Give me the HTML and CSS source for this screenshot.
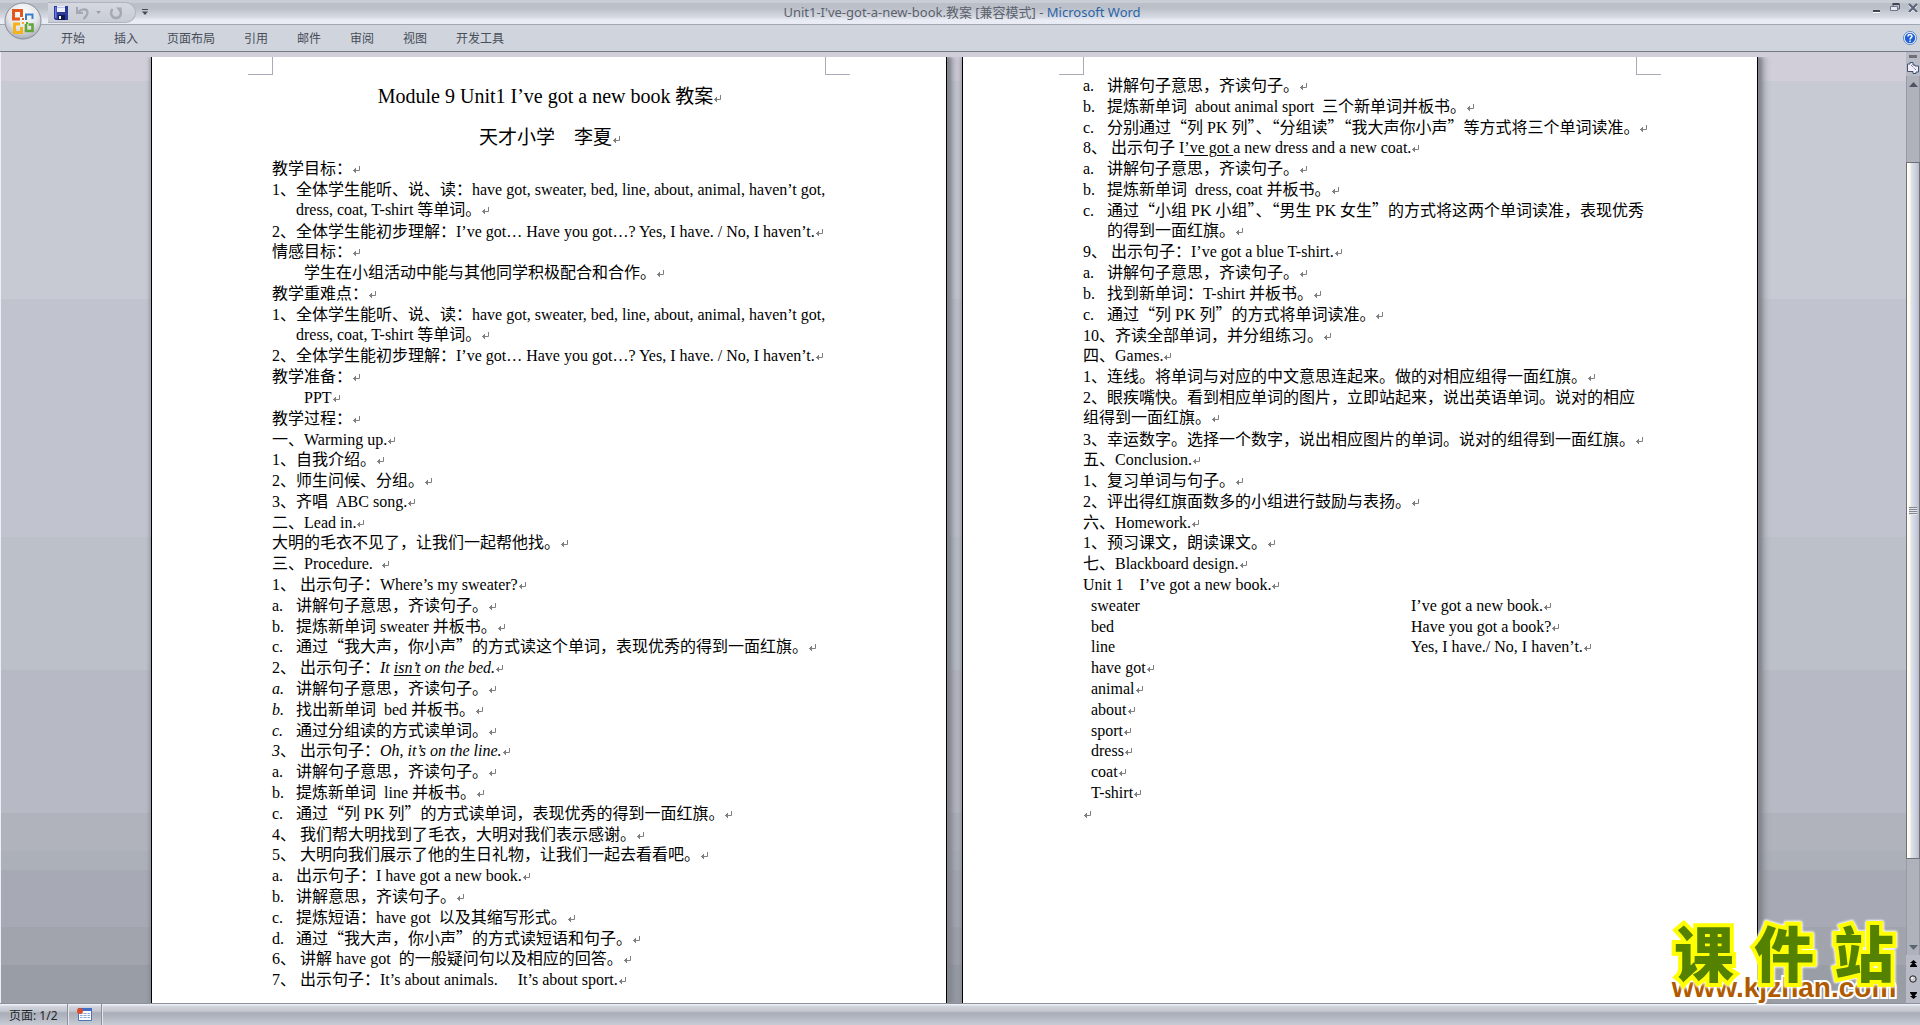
FILE: index.html
```html
<!DOCTYPE html>
<html lang="zh-CN">
<head>
<meta charset="utf-8">
<title>Unit1-I've-got-a-new-book.教案 [兼容模式] - Microsoft Word</title>
<link rel="stylesheet" href="styles.css">
</head>
<body>
<div class="app">
  <header class="titlebar">
    <div class="quick">
      <button class="ico" aria-label="保存"><svg width="14" height="14" viewBox="0 0 14 14"><path d="M0 0h14v14H1.500L0 12.500z" fill="#2c3a9c"/><path d="M1 1h1.500v11H1z" fill="#6d7be0"/><path d="M3 0h8v6H3z" fill="#eef1fb"/><path d="M3 1h8v1H3z" fill="#b9c2e8"/><path d="M4 9h7v5H4z" fill="#11184a"/><path d="M5 10h2v3H5z" fill="#fff"/></svg></button>
      <button class="ico" aria-label="撤消"><svg width="14" height="14" viewBox="0 0 14 14"><path d="M1 1v6h6" fill="none" stroke="#a3a8b4" stroke-width="2"/><path d="M2 6.500C5 3 11 2 11.500 6c.3 3-2 5-4 7" fill="none" stroke="#a3a8b4" stroke-width="2.200"/></svg></button>
      <button class="ico tiny" aria-label="撤消列表"><svg width="5" height="3" viewBox="0 0 5 3"><path d="M0 0h5L2.500 3z" fill="#9a9fab"/></svg></button>
      <button class="ico" aria-label="重复"><svg width="14" height="14" viewBox="0 0 14 14"><path d="M3.500 3C1 6 2 12 7 12s6.500-6 3-9" fill="none" stroke="#a3a8b4" stroke-width="2.400"/><path d="M7 1.500h5.500V7z" fill="#a3a8b4"/></svg></button>
    </div>
    <button class="ico more" aria-label="自定义快速访问工具栏"><svg width="6" height="6" viewBox="0 0 6 6"><path d="M0 0h6v1H0zM0 2.500h6L3 6z" fill="#444a55"/></svg></button>
    <h1 class="caption">Unit1-I've-got-a-new-book.教案 [兼容模式] - <span>Microsoft Word</span></h1>
    <div class="window">
      <button class="ico" aria-label="最小化"><svg width="10" height="10" viewBox="0 0 10 10"><path d="M1 7h7v2H1z" fill="#41454f"/><path d="M1 9h7v1H1z" fill="#fff"/></svg></button>
      <button class="ico" aria-label="还原"><svg width="10" height="10" viewBox="0 0 10 10"><path d="M3 3V1.500h6.500V6H8" fill="none" stroke="#555b68"/><path d="M2.500 1h7" stroke="#41454f" stroke-width="2"/><path d="M.5 3.500h7v4h-7z" fill="#e6e9f2" stroke="#6b7691"/></svg></button>
      <button class="ico" aria-label="关闭"><svg width="10" height="10" viewBox="0 0 10 10"><path d="M1 2l8 8M9 2l-8 8" stroke="#fff" stroke-width="2"/><path d="M1 1l8 8M9 1L1 9" stroke="#5b6579" stroke-width="2.200"/></svg></button>
    </div>
  </header>
  <button class="office" aria-label="Office 按钮"><svg width="38" height="38" viewBox="0 0 38 38">
    <defs><radialGradient id="orb" cx=".5" cy=".3" r=".7"><stop offset="0" stop-color="#fff"/><stop offset=".6" stop-color="#e3e5ea"/><stop offset="1" stop-color="#a9adb6"/></radialGradient></defs>
    <circle cx="19" cy="19" r="18" fill="url(#orb)" stroke="#8a8e98"/>
    <g fill="none" stroke-width="3"><path d="M16 17H9.500V8.500h8V15" stroke="#e2571c"/><path d="M22 17V12.500h6.500V17" stroke="#3a7fc9" stroke-width="2"/><path d="M16 22H10.500v8.500h7V25" stroke="#f6b21b"/><path d="M22 22v7h6.500V22.500h-4" stroke="#63a537" stroke-width="2.600"/></g>
    <path d="M18 16h2v2h-2z" fill="#e2571c"/><path d="M21 16h2v2h-2z" fill="#3a7fc9"/><path d="M18 20h2v2h-2z" fill="#f6b21b"/><path d="M22 20h2v2h-2z" fill="#63a537"/>
  </svg></button>
  <nav class="ribbon">
    <button>开始</button><button>插入</button><button>页面布局</button><button>引用</button><button>邮件</button><button>审阅</button><button>视图</button><button>开发工具</button>
    <button class="help" aria-label="帮助"><svg width="14" height="14" viewBox="0 0 14 14"><circle cx="7" cy="7" r="6.500" fill="#fff" stroke="#5b86c4"/><circle cx="7" cy="7" r="5.200" fill="#1f5fd6"/><path d="M5 5.500C5 3 9 3 9 5.300 9 6.700 7 6.700 7 8.500M7 9.500V11" fill="none" stroke="#fff" stroke-width="1.500"/></svg></button>
  </nav>

  <main class="workspace">
    <div class="pages">
      <article class="page">
        <h2><span class="big">Module 9 Unit1 I’ve got a new book</span> 教案</h2>
        <h2>天才小学　李夏</h2>
        <p>教学目标：</p>
        <p class="two hang">1、全体学生能听、说、读：have got, sweater, bed, line, about, animal, haven’t got,<br>dress, coat, T-shirt 等单词。</p>
        <p>2、全体学生能初步理解：I’ve got… Have you got…? Yes, I have. / No, I haven’t.</p>
        <p>情感目标：</p>
        <p class="indent">学生在小组活动中能与其他同学积极配合和合作。</p>
        <p>教学重难点：</p>
        <p class="two hang">1、全体学生能听、说、读：have got, sweater, bed, line, about, animal, haven’t got,<br>dress, coat, T-shirt 等单词。</p>
        <p>2、全体学生能初步理解：I’ve got… Have you got…? Yes, I have. / No, I haven’t.</p>
        <p>教学准备：</p>
        <p class="indent">PPT</p>
        <p>教学过程：</p>
        <p>一、Warming up.</p>
        <p>1、自我介绍。</p>
        <p>2、师生问候、分组。</p>
        <p>3、齐唱&nbsp; ABC song.</p>
        <p>二、Lead in.</p>
        <p>大明的毛衣不见了，让我们一起帮他找。</p>
        <p>三、Procedure.&nbsp; </p>
        <p>1、 出示句子：Where’s my sweater?</p>
        <p><span class="mk">a.</span>讲解句子意思，齐读句子。</p>
        <p><span class="mk">b.</span>提炼新单词 sweater 并板书。</p>
        <p><span class="mk">c.</span><span class="zh">通过“我大声，你小声”的方式读这个单词，表现优秀的得到一面红旗。</span></p>
        <p>2、 出示句子：<i>It <u>isn’t</u> on the bed.</i></p>
        <p><i class="mk">a.</i>讲解句子意思，齐读句子。</p>
        <p><i class="mk">b.</i>找出新单词&nbsp; bed 并板书。</p>
        <p><i class="mk">c.</i>通过分组读的方式读单词。</p>
        <p><i>3</i>、 出示句子：<i>Oh, it’s on the line.</i></p>
        <p><span class="mk">a.</span>讲解句子意思，齐读句子。</p>
        <p><span class="mk">b.</span>提炼新单词&nbsp; line 并板书。</p>
        <p><span class="mk">c.</span><span class="zh">通过“列</span> PK <span class="zh">列”的方式读单词，表现优秀的得到一面红旗。</span></p>
        <p>4、 我们帮大明找到了毛衣，大明对我们表示感谢。</p>
        <p>5、 大明向我们展示了他的生日礼物，让我们一起去看看吧。</p>
        <p><span class="mk">a.</span>出示句子：I have got a new book.</p>
        <p><span class="mk">b.</span>讲解意思，齐读句子。</p>
        <p><span class="mk">c.</span>提炼短语：have got&nbsp; 以及其缩写形式。</p>
        <p><span class="mk">d.</span><span class="zh">通过“我大声，你小声”的方式读短语和句子。</span></p>
        <p>6、 讲解 have got&nbsp; 的一般疑问句以及相应的回答。</p>
        <p>7、 出示句子：It’s about animals.&nbsp;&nbsp;&nbsp;&nbsp; It’s about sport.</p>
      </article>
      <article class="page">
        <p><span class="mk">a.</span>讲解句子意思，齐读句子。</p>
        <p><span class="mk">b.</span>提炼新单词&nbsp; about animal sport&nbsp; 三个新单词并板书。</p>
        <p><span class="mk">c.</span><span class="zh">分别通过“列</span> PK <span class="zh">列”、“分组读”“我大声你小声”等方式将三个单词读准。</span></p>
        <p>8、 出示句子 I<u>’ve got </u>a new dress and a new coat.</p>
        <p><span class="mk">a.</span>讲解句子意思，齐读句子。</p>
        <p><span class="mk">b.</span>提炼新单词&nbsp; dress, coat 并板书。</p>
        <p class="two hang"><span class="mk">c.</span><span class="zh">通过“小组</span> PK <span class="zh">小组”、“男生</span> PK <span class="zh">女生”的方式将这两个单词读准，表现优秀</span><br>的得到一面红旗。</p>
        <p>9、 出示句子：I’ve got a blue T-shirt.</p>
        <p><span class="mk">a.</span>讲解句子意思，齐读句子。</p>
        <p><span class="mk">b.</span>找到新单词：T-shirt 并板书。</p>
        <p><span class="mk">c.</span><span class="zh">通过“列</span> PK <span class="zh">列”的方式将单词读准。</span></p>
        <p>10、齐读全部单词，并分组练习。</p>
        <p>四、Games.</p>
        <p>1、连线。将单词与对应的中文意思连起来。做的对相应组得一面红旗。</p>
        <p class="two">2、眼疾嘴快。看到相应单词的图片，立即站起来，说出英语单词。说对的相应<br>组得到一面红旗。</p>
        <p>3、幸运数字。选择一个数字，说出相应图片的单词。说对的组得到一面红旗。</p>
        <p>五、Conclusion.</p>
        <p>1、复习单词与句子。</p>
        <p>2、评出得红旗面数多的小组进行鼓励与表扬。</p>
        <p>六、Homework.</p>
        <p>1、预习课文，朗读课文。</p>
        <p>七、Blackboard design.</p>
        <p>Unit 1&nbsp;&nbsp;&nbsp; I’ve got a new book.</p>
        <p class="word"><span class="col">sweater</span>I’ve got a new book.</p>
        <p class="word"><span class="col">bed</span>Have you got a book?</p>
        <p class="word"><span class="col">line</span>Yes, I have./ No, I haven’t.</p>
        <p class="word">have got</p>
        <p class="word">animal</p>
        <p class="word">about</p>
        <p class="word">sport</p>
        <p class="word">dress</p>
        <p class="word">coat</p>
        <p class="word">T-shirt</p>
        <p></p>
      </article>
    </div>
    <aside class="scroll">
      <span class="split"></span>
      <button class="ico ruler" aria-label="标尺"><svg width="12" height="12" viewBox="0 0 12 12"><path d="M1 2h2V.500h3V3h2v1h3.500v6H9v1.500H6V9.500H.5V2z" fill="#f2ecf8" stroke="#3f5572"/><path d="M4 3l5 5" stroke="#3f5572" stroke-dasharray="1 1"/></svg></button>
      <div class="track">
        <button class="ico arrow" aria-label="向上滚动"><svg width="9" height="5" viewBox="0 0 9 5"><path d="M0 5L4.500 0 9 5z" fill="#4d5564"/></svg></button>
        <div class="lane"><div class="thumb"><span></span></div></div>
        <button class="ico arrow" aria-label="向下滚动"><svg width="9" height="5" viewBox="0 0 9 5"><path d="M0 0h9L4.500 5z" fill="#5b6675"/></svg></button>
      </div>
      <button class="ico nav" aria-label="前一页"><svg width="7" height="7" viewBox="0 0 7 7"><path d="M3.500 0L7 3H4.500L7 6v1H0V6l2.500-3H0z" fill="#000"/></svg></button>
      <button class="ico nav" aria-label="选择浏览对象"><svg width="8" height="8" viewBox="0 0 8 8"><circle cx="4" cy="4" r="3.200" fill="#c9cbd0" stroke="#222"/><circle cx="3" cy="3" r="1" fill="#fff"/></svg></button>
      <button class="ico nav" aria-label="下一页"><svg width="7" height="7" viewBox="0 0 7 7"><path d="M3.500 7L7 4H4.500L7 1V0H0v1l2.500 3H0z" fill="#000"/></svg></button>
    </aside>
    <div class="stamp">
      <div class="stamp-name"><span>课</span><span>件</span><span>站</span></div>
      <div class="stamp-url">www.kjzhan.com</div>
    </div>
  </main>

  <footer class="status">
    <span class="cell">页面: 1/2</span>
    <span class="cell"><svg width="15" height="13" viewBox="0 0 15 13"><path d="M1.500.5h13v12h-13z" fill="#fff" stroke="#4d73b8"/><path d="M1 0h14v3H1z" fill="#3f6ec6"/><path d="M3 5.500h10M3 7.500h10M3 9.500h10" stroke="#8fa9d6"/><path d="M6 4v7M10 4v7" stroke="#fff"/><circle cx="3" cy="3" r="3" fill="#dc4a2a"/></svg></span>
  </footer>
</div>
</body>
</html>
```
FILE: styles.css
```css
* { box-sizing: border-box; }

body {
  margin: 0;
  font-family: "Noto Sans", "Noto Sans CJK SC", sans-serif;
  font-size: 12px;
  color: #474d59;
}

h1, h2, p { margin: 0; font-weight: 400; }

button {
  margin: 0;
  padding: 0;
  border: 0;
  background: none;
  font: inherit;
  color: inherit;
}

svg { display: block; }

.app {
  position: relative;
  display: flex;
  flex-direction: column;
  min-height: 100vh;
  background: #d0d4dd;
}

/* Title bar */
.titlebar {
  display: flex;
  align-items: flex-start;
  height: 25px;
  padding: 0 2px 0 48px;
  border-bottom: 1px solid #a3a7b4;
  background: linear-gradient(#c9cdd6 0 3px, #bbbfc8 3px 8px, #c4c8d1 11px, #d5d9e1 17px, #e9ecf4 20px);
}

.ico {
  display: flex;
  align-items: center;
  justify-content: center;
}

.quick {
  display: flex;
  align-items: center;
  gap: 8px;
  width: 88px;
  height: 21px;
  margin-top: 2px;
  padding-left: 6px;
  border: 1px solid #b0b4bf;
  border-left: 0;
  border-radius: 0 11px 11px 0;
  background: linear-gradient(#d5d8e0, #c8ccd5);
}

.tiny { margin-left: -2px; }

.more { margin: 9px 0 0 6px; }

.caption {
  flex: 1;
  padding-right: 96px;
  font-size: 13px;
  line-height: 25px;
  text-align: center;
  color: #5c616d;
}

.caption span { color: #2a64a8; }

.window {
  display: flex;
  gap: 8px;
  padding-top: 3px;
}

.office {
  position: absolute;
  top: 2px;
  left: 4px;
}

/* Ribbon tabs */
.ribbon {
  display: flex;
  align-items: center;
  gap: 29px;
  height: 27px;
  padding: 0 3px 0 61px;
  border-bottom: 1px solid #747a88;
}

.help { margin-left: auto; }

/* Document area */
.workspace {
  position: relative;
  flex: 1;
  display: flex;
  background: linear-gradient(
    #d1ceda 0 3%, #c7cad3 3% 26%, #c1c4ce 26% 51%, #bcc0c9 51% 65%,
    #b7bac4 65% 80%, #b0b3bc 80% 84%, #acb0b9 84% 86%, #a7aab4 86% 92%,
    #a1a4ad 92% 96%, #999da6 96%);
}

.pages {
  flex: 1;
  min-width: 0;
  display: flex;
  gap: 15px;
  padding: 5px 148px 0 150px;
  border-left: 1px solid #eceef2;
}

.page {
  flex: 1;
  min-width: 0;
  position: relative;
  display: grid;
  grid-template-rows: repeat(44, minmax(20px, 1fr));
  padding: 19px 119px 12px 120px;
  border: solid #000;
  border-width: 0 1px;
  background: #fff;
  box-shadow: 4px 0 3px #83868d, 8px 0 5px rgba(120, 123, 131, .4), -2px 0 3px rgba(120, 123, 131, .5);
  clip-path: inset(0 -16px 0 -8px);
  font-family: "Liberation Serif", "Noto Sans CJK SC", serif;
  font-size: 16px;
  line-height: 20px;
  white-space: nowrap;
  color: #000;
}

/* Crop marks at the text margins */
.page::before, .page::after {
  content: "";
  position: absolute;
  top: 0;
  width: 24px;
  height: 17px;
  border: solid #a9abb8;
}

.page::before { left: 96px; border-width: 0 1px 1px 0; }
.page::after { right: 96px; border-width: 0 0 1px 1px; }

.page h2 {
  grid-row: span 2;
  align-self: center;
  font-size: 19px;
  line-height: 24px;
  text-align: center;
}

.page p { height: 20px; }

.big { font-size: 20px; }

/* Paragraph mark */
h2::after, p::after {
  content: "";
  display: inline-block;
  width: 8px;
  height: 8px;
  background: url("data:image/svg+xml,%3Csvg xmlns='http://www.w3.org/2000/svg' width='8' height='8'%3E%3Cpath d='M7.500 0v4.500H1M3.500 2v5M2.500 3v3' fill='none' stroke='%23808080'/%3E%3C/svg%3E");
}

.page .two { grid-row: span 2; height: 40px; }
.hang { padding-left: 24px; text-indent: -24px; }
.hang .mk { text-indent: 0; }
.indent { padding-left: 32px; }
.word { padding-left: 8px; }
.mk { display: inline-block; width: 24px; }
.col { display: inline-block; width: 320px; }
.zh { font-family: "Noto Sans CJK SC", sans-serif; line-height: 0; }
u { text-underline-offset: 2px; }

/* Scroll bar */
.scroll {
  display: flex;
  flex-direction: column;
  align-items: center;
  width: 14px;
  background: #b8bbc5;
}

.split {
  width: 8px;
  height: 3px;
  margin: 3px 0 2px;
  background: #6d7078;
}

.ruler { height: 16px; }

.track {
  flex: 1;
  display: flex;
  flex-direction: column;
  width: 14px;
  border: solid #989ba5;
  border-width: 0 1px;
  background: #afb2bb;
}

.arrow { height: 16px; }

.lane {
  flex: 1;
  display: flex;
  padding: 70px 0 80px;
}

.thumb {
  flex: 1;
  display: flex;
  align-items: center;
  justify-content: center;
  margin: 0 -1px;
  border: 1px solid #6d7078;
  background: linear-gradient(90deg, #fff 0 1px, #fffbe9 1px 3px, #dfe4ef 4px, #ced3df 8px, #b9bdc9);
}

.thumb span {
  width: 8px;
  height: 8px;
  background: repeating-linear-gradient(#82858f 0 1px, #e4e7ef 1px 2px);
}

.nav { height: 16px; }

/* Site stamp over the lower right corner */
.stamp {
  position: absolute;
  right: 22px;
  bottom: 1px;
  width: 228px;
}

.stamp-name {
  display: flex;
  justify-content: space-between;
  padding: 0 4px;
  font: 900 60px/46px "Noto Sans CJK SC Black", "Noto Sans CJK SC", sans-serif;
  color: #548200;
  -webkit-text-stroke: 8px #ff0;
  paint-order: stroke fill;
  filter: drop-shadow(0 0 1px #fff) drop-shadow(0 0 1px #fff);
}

.stamp-url {
  font: 700 28px/28px "Liberation Sans", sans-serif;
  text-align: center;
  color: #b05a00;
  -webkit-text-stroke: 4px #fff;
  paint-order: stroke fill;
}

/* Status bar */
.status {
  display: flex;
  height: 22px;
  border-top: 1px solid #8e919c;
  background: linear-gradient(#eceef3 0 1px, #d3d6de 2px, #c3c6cf 7px, #a9adb7 9px, #b4b8c2 14px, #c8ccd5 21px);
  color: #24262b;
}

.cell {
  display: flex;
  align-items: center;
  padding: 0 9px;
  border-right: 1px solid #8e919c;
  box-shadow: 1px 0 #e3e5ea;
}
```
